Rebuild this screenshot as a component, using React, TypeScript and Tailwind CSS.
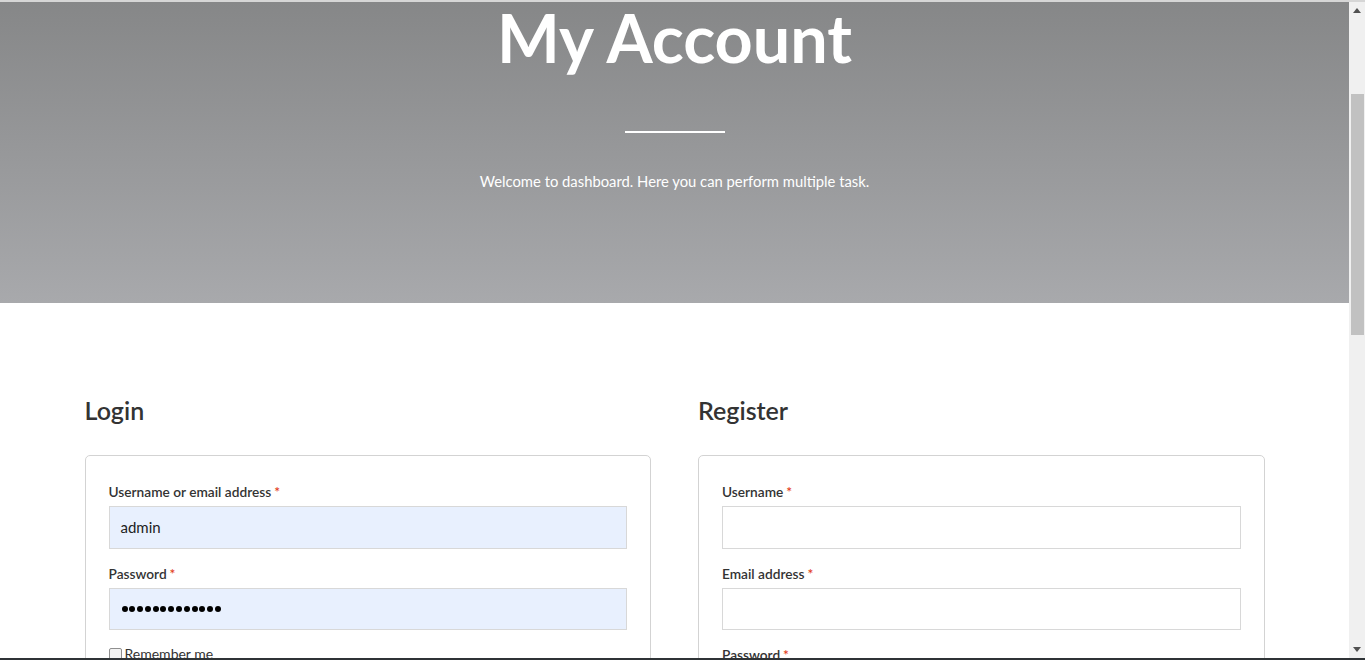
import React from "react";

function Label({ text }: { text: string }) {
  return (
    <label className="block text-[13.7px] leading-[20px] font-semibold text-[#333333]">
      {text}
      <span className="ml-[3px] text-[#e2401c]">*</span>
    </label>
  );
}

export default function App() {
  const dots = Array.from({ length: 13 });
  return (
    <div
      className="flex h-[660px] w-full flex-col overflow-hidden bg-white"
      style={{ fontFamily: "Lato, 'Open Sans', sans-serif" }}
    >
      <div className="h-[2px] w-full bg-[#d6d6d6]" />
      <div className="flex min-h-0 flex-1">
        <main className="min-w-0 flex-1 overflow-hidden">
          <section className="flex h-[301px] flex-col items-center bg-gradient-to-b from-[#868788] to-[#a8a9ac] text-white">
            <h1 className="mt-[-1px] text-[66.5px] leading-[72px] font-bold">
              My Account
            </h1>
            <div className="mt-[58px] h-[2px] w-[100px] bg-white" />
            <p className="mt-[38px] text-[14.8px] leading-[20px]">
              Welcome to dashboard. Here you can perform multiple task.
            </p>
          </section>
          <div className="mx-auto grid w-[1180px] grid-cols-2 gap-[47px] pt-[90px]">
            <div>
              <h2 className="text-[25px] leading-[34px] font-semibold text-[#333333]">Login</h2>
              <div className="mt-[28px] rounded-[5px] border border-[#d3d3d3] px-[23px] pt-[26px] pb-[30px]">
                <Label text="Username or email address" />
                <div className="mt-[4px] flex h-[43px] items-center border border-[#d8d8d8] bg-[#e8f0fe] px-[11px] text-[15px] text-[#222222]">
                  admin
                </div>
                <div className="mt-[15px]">
                  <Label text="Password" />
                </div>
                <div className="mt-[4px] flex h-[42px] items-center gap-[1.8px] border border-[#d8d8d8] bg-[#e8f0fe] px-[12px]">
                  {dots.map((_, i) => (
                    <span key={i} className="inline-block h-[6px] w-[6px] rounded-full bg-black" />
                  ))}
                </div>
                <div className="mt-[15px] flex items-center gap-[3px] text-[14px] leading-[18px] text-[#333333]">
                  <span className="inline-block h-[13px] w-[13px] rounded-[2px] border border-[#8f8f8f] bg-[#f3f3f3]" />
                  Remember me
                </div>
              </div>
            </div>
            <div>
              <h2 className="text-[25px] leading-[34px] font-semibold text-[#333333]">Register</h2>
              <div className="mt-[28px] rounded-[5px] border border-[#d3d3d3] px-[23px] pt-[26px] pb-[30px]">
                <Label text="Username" />
                <div className="mt-[4px] h-[43px] border border-[#d8d8d8] bg-white" />
                <div className="mt-[15px]">
                  <Label text="Email address" />
                </div>
                <div className="mt-[4px] h-[42px] border border-[#d8d8d8] bg-white" />
                <div className="mt-[15px]">
                  <Label text="Password" />
                </div>
                <div className="mt-[4px] h-[43px] border border-[#d8d8d8] bg-white" />
              </div>
            </div>
          </div>
        </main>
        <div className="flex w-[16px] flex-col items-center bg-[#f0f0f0]">
          <div className="flex h-[17px] w-full items-center justify-center">
            <svg width="8" height="5" viewBox="0 0 8 5">
              <path d="M0 5 L4 0 L8 5 Z" fill="#505050" />
            </svg>
          </div>
          <div className="mt-[75px] h-[241px] w-[13px] bg-[#c1c1c1]" />
          <div className="flex-1" />
          <div className="flex h-[17px] w-full items-center justify-center">
            <svg width="8" height="5" viewBox="0 0 8 5">
              <path d="M0 0 L8 0 L4 5 Z" fill="#505050" />
            </svg>
          </div>
        </div>
      </div>
      <div className="h-[2px] w-full bg-[#2f3336]" />
    </div>
  );
}
